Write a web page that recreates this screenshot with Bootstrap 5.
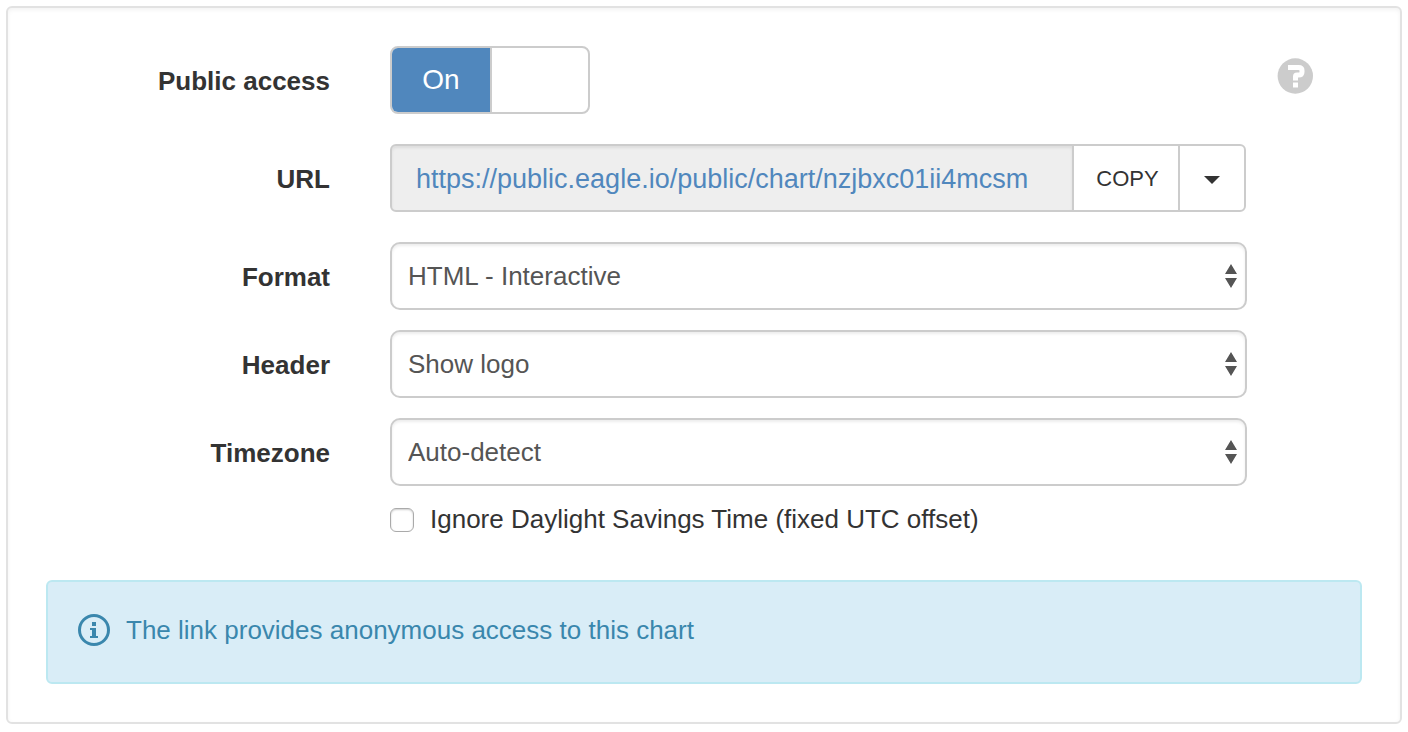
<!DOCTYPE html>
<html lang="en">
<head>
<meta charset="utf-8">
<meta name="viewport" content="width=device-width, initial-scale=1">
<title>Public access</title>
<link href="https://cdn.jsdelivr.net/npm/bootstrap@5.3.0/dist/css/bootstrap.min.css" rel="stylesheet">
<style>
  body { font-family: "Liberation Sans", Arial, sans-serif; font-size: 26px; line-height: 36px; color: #333; background: #fff; padding: 6px 6px 8px; }
  a { color: #5087bd; text-decoration: none; }
  .share-panel { border: 2px solid #e2e2e2; border-radius: 6px; padding: 38px; box-shadow: inset 0 2px 4px rgba(0,0,0,.05); }
  .share-form .row { --bs-gutter-x: 60px; margin-bottom: 20px; }
  .share-form .row.roomy { margin-bottom: 30px; }
  .share-form .col-form-label { font-weight: 700; font-size: 26px; line-height: 36px; padding-top: 17px; padding-bottom: 15px; }
  .share-form .help-col { padding: 12px 0 0; }
  .help-btn { display: block; border: 0; background: none; padding: 0; line-height: 0; }
  .switch-btn { width: 200px; height: 68px; padding: 0; border: 2px solid #ccc; border-radius: 8px; background: #fff; overflow: hidden; font-size: 28px; color: #fff; }
  .switch-btn .switch-on { width: 100px; height: 100%; background: #5087bd; border-right: 2px solid #ccc; }
  .share-form .form-control, .share-form .form-select { height: 68px; border: 2px solid #ccc; font-size: 26px; line-height: 36px; box-shadow: inset 0 2px 3px rgba(0,0,0,.075); }
  .share-form .form-control { background: #eee; padding: 15px 24px 13px; border-radius: 6px; font-size: 27px; }
  .share-form .form-select { border-radius: 10px; color: #555; padding: 14px 40px 14px 16px; background: #fff url("data:image/svg+xml,%3Csvg xmlns='http://www.w3.org/2000/svg' width='12' height='24'%3E%3Cpath fill='%23555' d='M6 0l6 10H0zM0 14h12L6 24z'/%3E%3C/svg%3E") no-repeat right 8px center / 12px 24px; }
  .url-group { padding-right: 1px; }
  .url-group .btn { border: 2px solid #ccc; border-radius: 6px; background: #fff; color: #333; font-size: 22px; line-height: 32px; padding: 17px 20px 15px 22px; }
  .url-group .btn-copy { width: 108px; }
  .url-group .btn-more { width: 68px; display: flex; align-items: center; justify-content: center; padding: 4px 0 0; }
  .url-group > :not(:first-child) { margin-left: -2px !important; }
  .share-form .form-check { min-height: 0; margin: 16px 0 0; padding: 0; gap: 16px; }
  .share-form .form-check-input { width: 24px; height: 24px; margin: 0; float: none; border: 1px solid #aaa; border-radius: 6px; box-shadow: inset 0 1px 2px rgba(0,0,0,.2); }
  .share-form .form-check-label { padding-bottom: 2px; line-height: 34px; }
  .share-form .row.last-row { margin-bottom: 42px; }
  .share-note { background: #d9edf7; border: 2px solid #bce8f1; color: #3a87ad; border-radius: 6px; padding: 30px 30px 34px; gap: 16px; }
</style>
</head>
<body>
<main class="share-panel">
  <form class="share-form">
    <div class="row roomy">
      <label class="col-3 col-form-label text-end" for="access">Public access</label>
      <div class="col-8">
        <button class="switch-btn d-flex" id="access" type="button" role="switch" aria-checked="true">
          <span class="switch-on d-flex align-items-center justify-content-center">On</span>
        </button>
      </div>
      <div class="col-1 help-col">
        <button class="help-btn" type="button" aria-label="Help">
          <svg width="36" height="36" viewBox="0 0 36 36" aria-hidden="true"><circle cx="18.3" cy="18" r="17.7" fill="#ccc"/><path fill="none" stroke="#fff" stroke-width="5" d="M11 9.5h10.5q3.5 0 3.5 3v1.500q0 3-3.500 3h-1.500q-1.500 0-1.500 1.500v4"/><path fill="#fff" d="M16 24.500h5v5h-5z"/></svg>
        </button>
      </div>
    </div>
    <div class="row roomy">
      <div class="col-3 col-form-label text-end">URL</div>
      <div class="col-8">
        <div class="input-group url-group flex-nowrap">
          <div class="form-control text-truncate"><a href="https://public.eagle.io/public/chart/nzjbxc01ii4mcsm">https://public.eagle.io/public/chart/nzjbxc01ii4mcsm</a></div>
          <button class="btn btn-copy" type="button">COPY</button>
          <button class="btn btn-more" type="button" aria-label="More URL actions">
            <svg width="16" height="8" viewBox="0 0 16 8" aria-hidden="true"><path fill="#333" d="M0 0h16L8 8z"/></svg>
          </button>
        </div>
      </div>
    </div>
    <div class="row">
      <label class="col-3 col-form-label text-end" for="format">Format</label>
      <div class="col-8"><select class="form-select" id="format"><option>HTML - Interactive</option></select></div>
    </div>
    <div class="row">
      <label class="col-3 col-form-label text-end" for="header">Header</label>
      <div class="col-8"><select class="form-select" id="header"><option>Show logo</option></select></div>
    </div>
    <div class="row last-row">
      <label class="col-3 col-form-label text-end" for="timezone">Timezone</label>
      <div class="col-8">
        <select class="form-select" id="timezone"><option>Auto-detect</option></select>
        <div class="form-check d-flex align-items-center">
          <input class="form-check-input" type="checkbox" id="dst">
          <label class="form-check-label" for="dst">Ignore Daylight Savings Time (fixed UTC offset)</label>
        </div>
      </div>
    </div>
  </form>
  <div class="share-note d-flex align-items-center" role="note">
    <svg class="flex-shrink-0" width="32" height="32" viewBox="0 0 32 32" aria-hidden="true"><circle cx="16" cy="16" r="14.5" fill="none" stroke="currentColor" stroke-width="3"/><path fill="currentColor" d="M14 8h4v4h-4zM12 14h6v8h2v2h-8v-2h2v-6h-2z"/></svg>
    <span>The link provides anonymous access to this chart</span>
  </div>
</main>
<script src="https://cdn.jsdelivr.net/npm/bootstrap@5.3.0/dist/js/bootstrap.bundle.min.js"></script>
</body>
</html>
